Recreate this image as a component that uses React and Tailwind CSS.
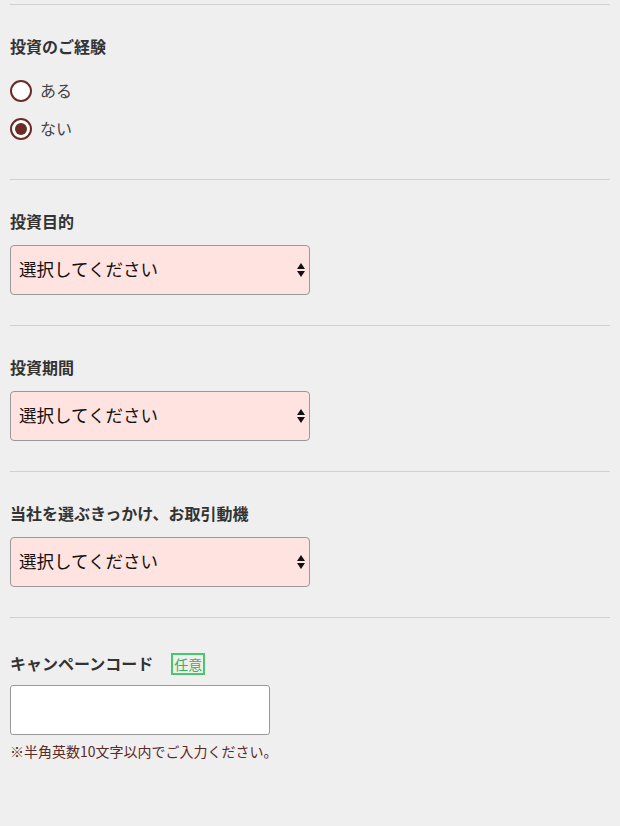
import { useState } from "react";

const FONT = { fontFamily: '"Noto Sans CJK JP", "Noto Sans", sans-serif' };

const SelectArrows = () => (
  <svg width="8" height="15" viewBox="0 0 8 15" className="pointer-events-none absolute right-[5px] top-1/2 -translate-y-1/2">
    <path d="M0 6.5 L4 0.5 L8 6.5 Z" fill="#111" />
    <path d="M0 8.5 L8 8.5 L4 14.5 Z" fill="#111" />
  </svg>
);

const Radio = ({ label, checked, onClick }) => (
  <label className="flex h-[22px] cursor-pointer items-center" onClick={onClick}>
    <span className="flex h-[22px] w-[22px] items-center justify-center rounded-full border-2 border-[#6b2c28] bg-white">
      {checked && <span className="h-[12px] w-[12px] rounded-full bg-[#6b2c28]" />}
    </span>
    <span className="ml-[8px] -translate-y-[1px] text-[16px] leading-[22px] text-[#444]">{label}</span>
  </label>
);

const SelectField = ({ title }) => (
  <section className="border-t border-[#d0d0d0] pt-[29px] pb-[30px]">
    <h2 className="text-[16px] font-bold leading-[24px] text-[#333]">{title}</h2>
    <div className="relative mt-[12px] w-[300px]">
      <select
        defaultValue=""
        className="h-[50px] w-full appearance-none rounded-[4px] border border-[#999] bg-[#ffe3e1] pb-[2px] pl-[8px] pr-[20px] text-[17.5px] text-[#111] outline-none"
        style={FONT}
      >
        <option value="">選択してください</option>
      </select>
      <SelectArrows />
    </div>
  </section>
);

export default function App() {
  const [exp, setExp] = useState("no");

  return (
    <div className="min-h-[826px] bg-[#efefef] px-[10px] pt-[4px]" style={FONT}>
      <section className="border-t border-[#d0d0d0] pt-[29px] pb-[39px]">
        <h2 className="text-[16px] font-bold leading-[24px] text-[#333]">投資のご経験</h2>
        <div className="mt-[22px] flex flex-col gap-[16px]">
          <Radio label="ある" checked={exp === "yes"} onClick={() => setExp("yes")} />
          <Radio label="ない" checked={exp === "no"} onClick={() => setExp("no")} />
        </div>
      </section>

      <SelectField title="投資目的" />
      <SelectField title="投資期間" />
      <SelectField title="当社を選ぶきっかけ、お取引動機" />

      <section className="border-t border-[#d0d0d0] pt-[34px] pb-[40px]">
        <div className="flex h-[24px] items-center">
          <h2 className="-translate-y-[1px] text-[16px] font-bold leading-[24px] text-[#333]">キャンペーンコード</h2>
          <span className="ml-[18px] border-2 border-[#4cc56f] px-[1px] text-[14px] leading-[18px] text-[#35b35a]">
            任意
          </span>
        </div>
        <input
          type="text"
          className="mt-[9px] block h-[50px] w-[260px] rounded-[3px] border border-[#999] bg-white px-[8px] text-[16px] outline-none"
        />
        <p className="mt-[6px] text-[14px] leading-[20px] text-[#5c2a26]">
          ※半角英数10文字以内でご入力ください。
        </p>
      </section>
    </div>
  );
}
